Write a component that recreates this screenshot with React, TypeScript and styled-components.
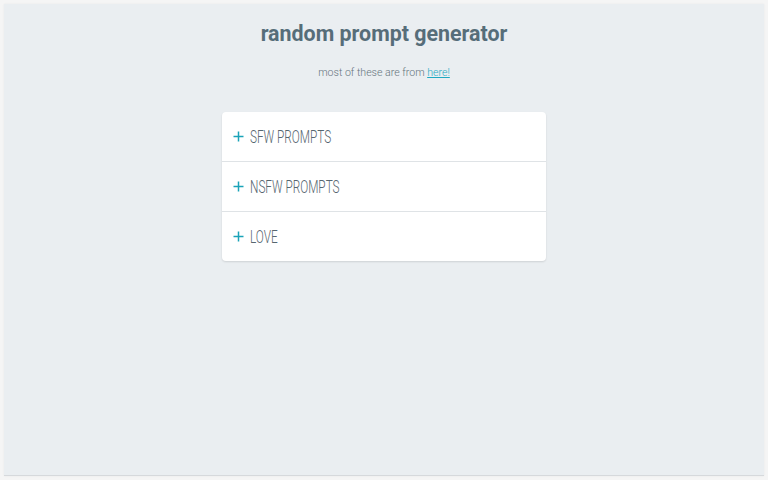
import { FC, useState } from 'react';
import styled, { createGlobalStyle } from 'styled-components';

type ItemProps = {
    label: string;
};

type OpenProps = {
    isOpen: boolean;
};

const items = ['SFW PROMPTS', 'NSFW PROMPTS', 'LOVE'];

const GlobalStyle = createGlobalStyle`
    html, body {
        margin: 0;
        padding: 0;
        height: 100%;
        background: #f5f5f5;
    }

    body {
        padding: 4px;
        box-sizing: border-box;
        font-family: Roboto, 'Liberation Sans', sans-serif;
    }

    #root {
        height: 100%;
    }
`;

const AccordionItem: FC<ItemProps> = ({ label }) => {
    const [open, setOpen] = useState(false);

    return (
        <Row>
            <Header onClick={() => setOpen(!open)}>
                <Plus isOpen={open} width='11' height='11' viewBox='0 0 11 11'>
                    <path d='M5.5 0.5 V10.5 M0.5 5.5 H10.5' />
                </Plus>
                <Label>{label}</Label>
            </Header>
        </Row>
    );
};

export default function App() {
    return (
        <>
            <GlobalStyle />
            <Page>
                <Title>random prompt generator</Title>
                <Subtitle>
                    most of these are from <Link href='#'>here!</Link>
                </Subtitle>
                <Card>
                    {items.map((item) => (
                        <AccordionItem key={item} label={item} />
                    ))}
                </Card>
            </Page>
        </>
    );
}

const Page = styled.main`
    height: 100%;
    box-sizing: border-box;
    background: #eaeef1;
    border-bottom: solid 1px #d6d9dc;
    box-shadow: 0 0 2px rgba(0, 0, 0, 0.06);
    display: flex;
    flex-direction: column;
    align-items: center;
    padding-top: 17px;
`;

const Title = styled.h1`
    margin: 0;
    font-size: 21.4px;
    font-weight: 700;
    color: #566d79;
    line-height: 26px;
`;

const Subtitle = styled.p`
    margin: 19px 0 0;
    font-size: 10.6px;
    font-weight: 300;
    color: #65747d;
    line-height: 14px;
`;

const Link = styled.a`
    color: #1fa9c2;
    text-decoration: underline;
`;

const Card = styled.section`
    margin-top: 32px;
    width: 324px;
    background: #ffffff;
    border-radius: 4px;
    box-shadow: 0 1px 2px rgba(0, 0, 0, 0.12);
    overflow: hidden;
`;

const Row = styled.div`
    border-bottom: solid 1px #dfe3e6;

    &:last-child {
        border-bottom: none;
    }
`;

const Header = styled.button`
    display: flex;
    align-items: center;
    gap: 6px;
    width: 100%;
    height: 49px;
    padding: 0 11px;
    border: none;
    background: none;
    cursor: pointer;
    text-align: left;
`;

const Label = styled.span`
    display: inline-block;
    font-family: Roboto, 'Liberation Sans', sans-serif;
    font-size: 18px;
    font-weight: 300;
    color: #56666f;
    line-height: 1;
    transform: scaleX(0.655);
    transform-origin: left center;
    white-space: nowrap;
`;

const Plus = styled.svg<OpenProps>`
    flex: none;
    stroke: #1aa3b8;
    stroke-width: 1.5;
    fill: none;
    transform: rotate(${({ isOpen }) => (isOpen ? '45deg' : '0deg')});
    transition: transform 0.25s;
`;
